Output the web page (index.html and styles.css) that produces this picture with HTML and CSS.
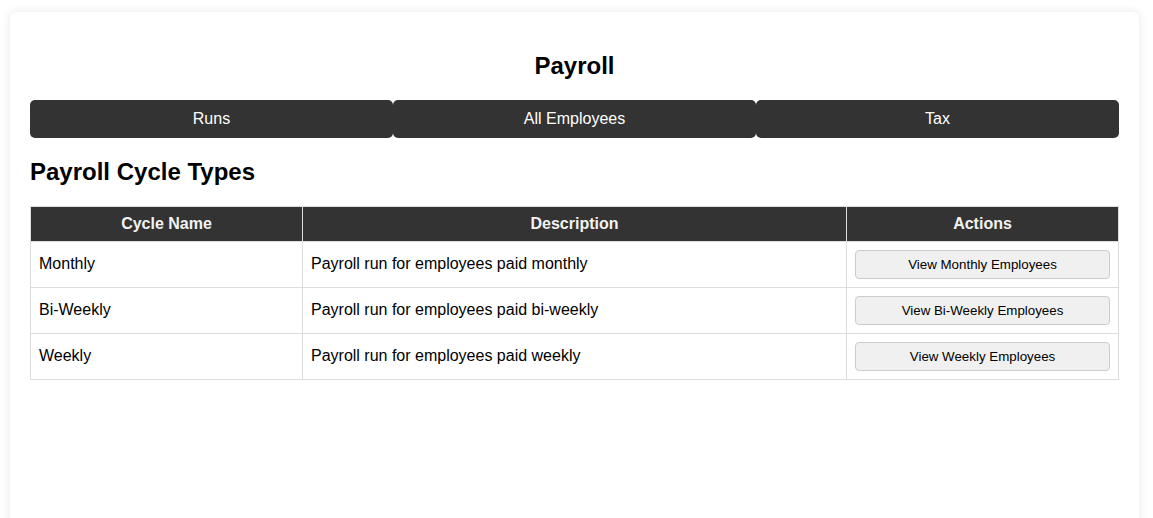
FILE: index.html
```html
<!DOCTYPE html>
<html lang="en">
<head>
<meta charset="utf-8">
<title>Payroll</title>
<link rel="stylesheet" href="styles.css">
</head>
<body>
<div class="container">
  <h1 class="title">Payroll</h1>
  <nav class="tabs">
    <button class="tab">Runs</button>
    <button class="tab">All Employees</button>
    <button class="tab">Tax</button>
  </nav>
  <h2 class="section-title">Payroll Cycle Types</h2>
  <table class="cycles">
    <thead>
      <tr>
        <th class="col-name">Cycle Name</th>
        <th class="col-desc">Description</th>
        <th class="col-actions">Actions</th>
      </tr>
    </thead>
    <tbody>
      <tr>
        <td>Monthly</td>
        <td>Payroll run for employees paid monthly</td>
        <td><button class="action">View Monthly Employees</button></td>
      </tr>
      <tr>
        <td>Bi-Weekly</td>
        <td>Payroll run for employees paid bi-weekly</td>
        <td><button class="action">View Bi-Weekly Employees</button></td>
      </tr>
      <tr>
        <td>Weekly</td>
        <td>Payroll run for employees paid weekly</td>
        <td><button class="action">View Weekly Employees</button></td>
      </tr>
    </tbody>
  </table>
</div>
</body>
</html>
```

FILE: styles.css
```css
html, body {
  margin: 0;
  padding: 0;
  background: #ffffff;
  font-family: "Liberation Sans", Arial, sans-serif;
  color: #000;
}

body {
  padding: 12px 14px 0 10px;
}

.container {
  background: #fff;
  border-radius: 6px;
  box-shadow: 0 0 10px rgba(0, 0, 0, 0.1);
  padding: 20px;
  min-height: 600px;
}

.title {
  font-size: 24px;
  font-weight: bold;
  text-align: center;
  margin: 20px 0;
}

.tabs {
  display: flex;
  margin: 0;
}

.tab {
  flex: 1;
  background: #333;
  color: #fff;
  border: none;
  border-radius: 5px;
  padding: 10px;
  font-family: "Liberation Sans", Arial, sans-serif;
  font-size: 16px;
  line-height: 18px;
  cursor: pointer;
}

.section-title {
  font-size: 24px;
  font-weight: bold;
  margin: 20px 0;
}

.cycles {
  width: 100%;
  border-collapse: collapse;
  table-layout: fixed;
  font-size: 16px;
}

.cycles th,
.cycles td {
  box-sizing: border-box;
  border: 1px solid #ddd;
  padding: 8px;
  line-height: 18px;
  text-align: left;
}

.cycles td {
  padding-top: 7px;
  padding-bottom: 9px;
}

.cycles th {
  background: #333;
  color: #f2f2f2;
  font-weight: bold;
  text-align: center;
}

.col-name { width: 25%; }
.col-desc { width: 50%; }
.col-actions { width: 25%; }

.cycles td:last-child {
  padding-top: 8px;
  padding-bottom: 8px;
}

.action {
  display: block;
  width: 100%;
  background: #f0f0f0;
  border: 1px solid #ccc;
  border-radius: 4px;
  padding: 6px 10px;
  font-family: "Liberation Sans", Arial, sans-serif;
  font-size: 13.333px;
  line-height: 15px;
  color: #000;
  cursor: pointer;
}
```
